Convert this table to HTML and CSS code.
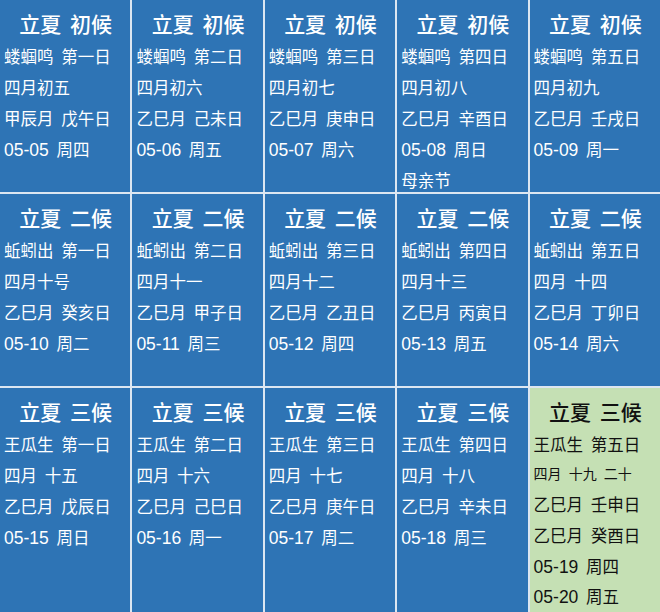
FILE: index.html
```html
<!DOCTYPE html>
<html lang="zh-CN">
<head>
<meta charset="utf-8">
<title>立夏</title>
<link rel="stylesheet" href="styles.css">
</head>
<body>
<div class="grid">
  <div class="cell">
    <div class="title">立夏 初候</div>
    <div class="line">蝼蝈鸣 第一日</div>
    <div class="line">四月初五</div>
    <div class="line">甲辰月 戊午日</div>
    <div class="line"><span class="num">05-05</span> 周四</div>
  </div>
  <div class="cell">
    <div class="title">立夏 初候</div>
    <div class="line">蝼蝈鸣 第二日</div>
    <div class="line">四月初六</div>
    <div class="line">乙巳月 己未日</div>
    <div class="line"><span class="num">05-06</span> 周五</div>
  </div>
  <div class="cell">
    <div class="title">立夏 初候</div>
    <div class="line">蝼蝈鸣 第三日</div>
    <div class="line">四月初七</div>
    <div class="line">乙巳月 庚申日</div>
    <div class="line"><span class="num">05-07</span> 周六</div>
  </div>
  <div class="cell">
    <div class="title">立夏 初候</div>
    <div class="line">蝼蝈鸣 第四日</div>
    <div class="line">四月初八</div>
    <div class="line">乙巳月 辛酉日</div>
    <div class="line"><span class="num">05-08</span> 周日</div>
    <div class="line">母亲节</div>
  </div>
  <div class="cell">
    <div class="title">立夏 初候</div>
    <div class="line">蝼蝈鸣 第五日</div>
    <div class="line">四月初九</div>
    <div class="line">乙巳月 壬戌日</div>
    <div class="line"><span class="num">05-09</span> 周一</div>
  </div>

  <div class="cell">
    <div class="title">立夏 二候</div>
    <div class="line">蚯蚓出 第一日</div>
    <div class="line">四月十号</div>
    <div class="line">乙巳月 癸亥日</div>
    <div class="line"><span class="num">05-10</span> 周二</div>
  </div>
  <div class="cell">
    <div class="title">立夏 二候</div>
    <div class="line">蚯蚓出 第二日</div>
    <div class="line">四月十一</div>
    <div class="line">乙巳月 甲子日</div>
    <div class="line"><span class="num">05-11</span> 周三</div>
  </div>
  <div class="cell">
    <div class="title">立夏 二候</div>
    <div class="line">蚯蚓出 第三日</div>
    <div class="line">四月十二</div>
    <div class="line">乙巳月 乙丑日</div>
    <div class="line"><span class="num">05-12</span> 周四</div>
  </div>
  <div class="cell">
    <div class="title">立夏 二候</div>
    <div class="line">蚯蚓出 第四日</div>
    <div class="line">四月十三</div>
    <div class="line">乙巳月 丙寅日</div>
    <div class="line"><span class="num">05-13</span> 周五</div>
  </div>
  <div class="cell">
    <div class="title">立夏 二候</div>
    <div class="line">蚯蚓出 第五日</div>
    <div class="line">四月 十四</div>
    <div class="line">乙巳月 丁卯日</div>
    <div class="line"><span class="num">05-14</span> 周六</div>
  </div>

  <div class="cell">
    <div class="title">立夏 三候</div>
    <div class="line">王瓜生 第一日</div>
    <div class="line">四月 十五</div>
    <div class="line">乙巳月 戊辰日</div>
    <div class="line"><span class="num">05-15</span> 周日</div>
  </div>
  <div class="cell">
    <div class="title">立夏 三候</div>
    <div class="line">王瓜生 第二日</div>
    <div class="line">四月 十六</div>
    <div class="line">乙巳月 己巳日</div>
    <div class="line"><span class="num">05-16</span> 周一</div>
  </div>
  <div class="cell">
    <div class="title">立夏 三候</div>
    <div class="line">王瓜生 第三日</div>
    <div class="line">四月 十七</div>
    <div class="line">乙巳月 庚午日</div>
    <div class="line"><span class="num">05-17</span> 周二</div>
  </div>
  <div class="cell">
    <div class="title">立夏 三候</div>
    <div class="line">王瓜生 第四日</div>
    <div class="line">四月 十八</div>
    <div class="line">乙巳月 辛未日</div>
    <div class="line"><span class="num">05-18</span> 周三</div>
  </div>
  <div class="cell cell-green">
    <div class="title">立夏 三候</div>
    <div class="line g1">王瓜生 第五日</div>
    <div class="line g2 small">四月 十九 二十</div>
    <div class="line g3">乙巳月 壬申日</div>
    <div class="line g4">乙巳月 癸酉日</div>
    <div class="line g4"><span class="num">05-19</span> 周四</div>
    <div class="line g5"><span class="num">05-20</span> 周五</div>
  </div>
</div>
</body>
</html>
```

FILE: styles.css
```css
html, body {
  margin: 0;
  padding: 0;
}
body {
  width: 660px;
  height: 612px;
  overflow: hidden;
  background: #dce6f1;
  font-family: "Noto Sans CJK SC", "Noto Sans", sans-serif;
}
.grid {
  display: grid;
  grid-template-columns: repeat(5, 1fr);
  grid-template-rows: 192px 192px 1fr;
  gap: 2px;
  width: 660px;
  height: 612px;
  background: #dce6f1;
}
.cell {
  background: #2e74b5;
  color: #ffffff;
  padding: 0 3px 0 4px;
  overflow: hidden;
  display: flex;
  flex-direction: column;
  word-spacing: 4px;
}
.title {
  padding-top: 5px;
  height: 36px;
  line-height: 36px;
  text-align: center;
  font-size: 21px;
  font-weight: 500;
  white-space: nowrap;
}
.line {
  height: 31px;
  line-height: 31px;
  font-size: 16.5px;
  white-space: nowrap;
}
.num {
  font-family: "Liberation Sans", "Noto Sans", sans-serif;
  font-size: 17.5px;
  word-spacing: 0;
}
.cell-green {
  background: #c5e0b4;
  color: #111111;
}
.cell-green .g1 { height: 30px; line-height: 30px; }
.cell-green .g2 { height: 29px; line-height: 29px; }
.cell-green .g3 { height: 32px; line-height: 32px; }
.cell-green .g4 { height: 31px; line-height: 31px; }
.cell-green .g5 { height: 29px; line-height: 29px; }
.small {
  font-size: 14px;
}
```
